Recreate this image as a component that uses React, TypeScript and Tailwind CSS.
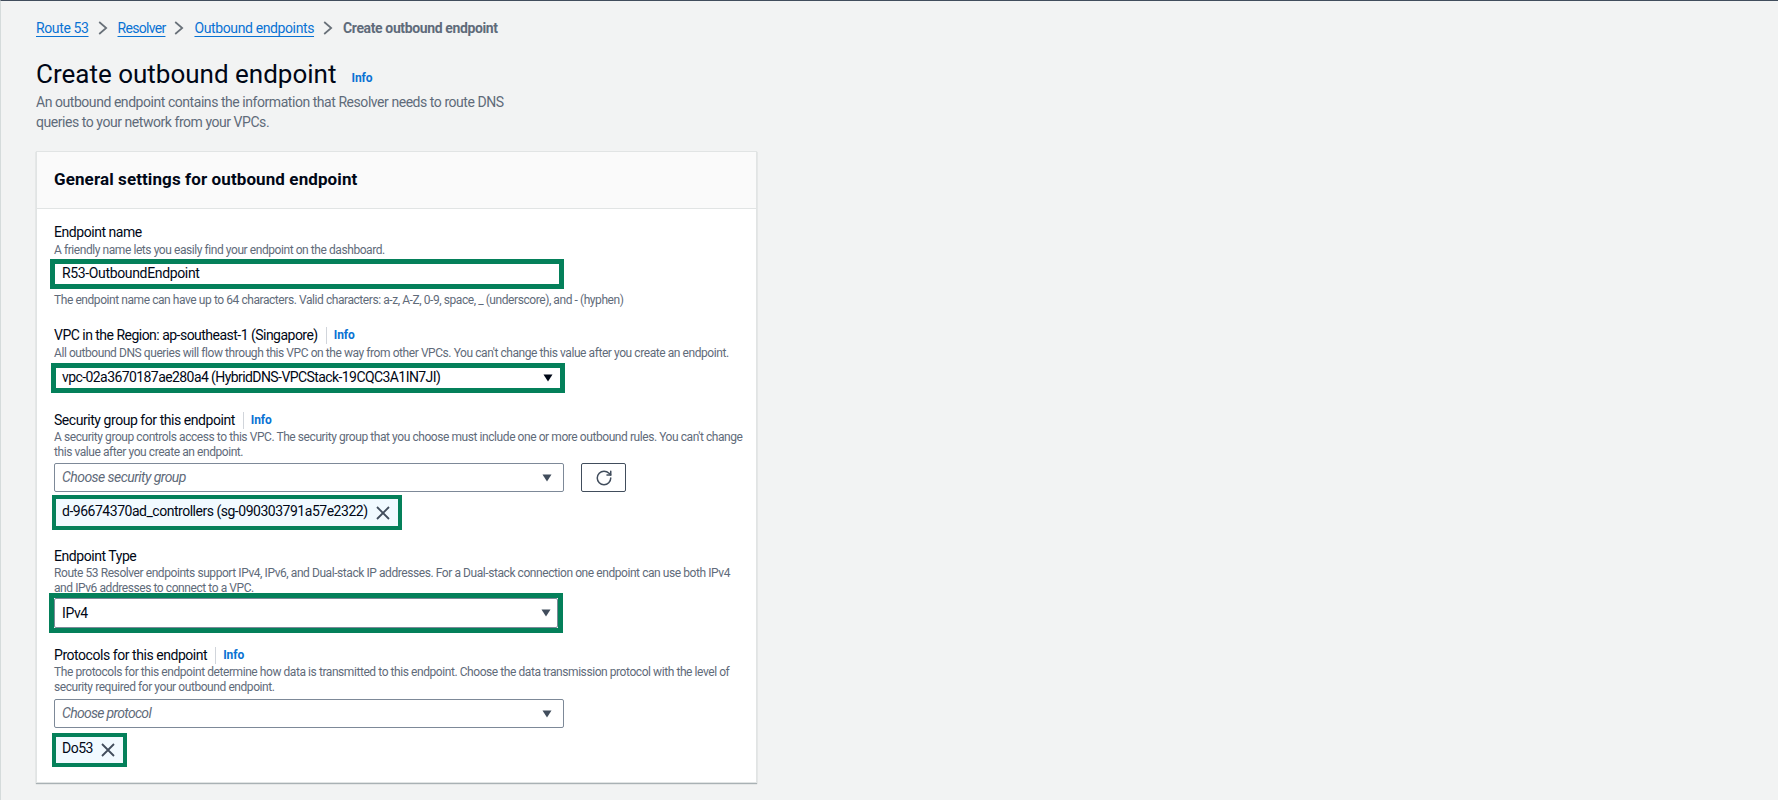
import { RotateCw } from "lucide-react";

function Crumb({ text, tight }: { text: string; tight?: boolean }) {
  return <a className={`text-[#0972d3] underline underline-offset-[3px] ${tight ? "tracking-[-0.7px]" : ""}`}>{text}</a>;
}

function CrumbArrow() {
  return (
    <svg width="10" height="14" viewBox="0 0 10 14" className="ml-[9px] mr-[10px] text-[#687078]">
      <path d="M1.2 1l7 6-7 6" fill="none" stroke="currentColor" strokeWidth="1.7" />
    </svg>
  );
}

function Label({ text, info, tight }: { text: string; info?: boolean; tight?: boolean }) {
  return (
    <div className={`flex items-center h-[18px] text-[14px] leading-[18px] text-[#000716] ${tight ? "tracking-[-0.52px]" : "tracking-[-0.45px]"}`}>
      <span>{text}</span>
      {info && (
        <span className="flex items-center ml-2 pl-[7px] border-l border-[#d1d5db] h-[17px]">
          <span className="font-bold text-[#0972d3] text-[12px] leading-4 tracking-[-0.1px]">Info</span>
        </span>
      )}
    </div>
  );
}

function Desc({ children, single }: { children: React.ReactNode; single?: boolean }) {
  return (
    <p className={`text-[12px] leading-[15px] text-[#5f6b7a] tracking-[-0.43px] w-[690px] ${single ? "pt-[2px] -mb-px" : "pt-px"}`}>
      {children}
    </p>
  );
}

function Caret({ dark }: { dark?: boolean }) {
  return (
    <svg width="10" height="8" viewBox="0 0 10 8" className={dark ? "text-[#000716]" : "text-[#414d5c]"}>
      <path d="M0.5 0.5h9L5 7.5z" fill="currentColor" />
    </svg>
  );
}

function Select({ value, textClass, pad }: { value: string; textClass: string; pad: string }) {
  return (
    <div className={`flex items-center justify-between w-full h-full pl-[7px] bg-white border border-[#7d8998] rounded-[2px] ${pad}`}>
      <span className={`text-[14px] ${textClass}`}>{value}</span>
      <Caret />
    </div>
  );
}

function Token({ text, h }: { text: string; h: string }) {
  return (
    <div className={`inline-flex items-center border-[4px] border-[#04805a] bg-[#f1faff] pl-[6px] pr-[8px] ${h}`}>
      <span className="text-[14px] tracking-[-0.48px] text-[#000716] -mt-[3px]">{text}</span>
      <svg width="14" height="14" viewBox="0 0 14 14" className="ml-[8px] text-[#414d5c]">
        <path d="M1 1l12 12M13 1L1 13" fill="none" stroke="currentColor" strokeWidth="1.8" />
      </svg>
    </div>
  );
}

export default function App() {
  return (
    <div className="[font-family:Roboto,'Liberation_Sans',sans-serif] w-[1778px] h-[800px] overflow-hidden bg-[#f2f3f3] border-t border-l border-t-[#414d5c] border-l-[#d5dbdb] pl-[35px]">
      <nav className="flex items-center h-[18px] mt-[18px] text-[14px] tracking-[-0.38px]">
        <Crumb text="Route 53" />
        <CrumbArrow />
        <Crumb text="Resolver" tight />
        <CrumbArrow />
        <Crumb text="Outbound endpoints" />
        <CrumbArrow />
        <span className="font-bold text-[#5f6b7a]">Create outbound endpoint</span>
      </nav>

      <div className="flex items-start mt-[18px] h-[36px]">
        <h1 className="pt-px text-[26px] leading-[36px] text-[#000716]">Create outbound endpoint</h1>
        <span className="ml-[15px] mt-[15px] font-bold text-[#0972d3] text-[12px] leading-4 tracking-[-0.1px]">Info</span>
      </div>
      <p className="mt-px text-[14px] leading-[20px] text-[#5f6b7a] tracking-[-0.45px]">
        An outbound endpoint contains the information that Resolver needs to route DNS
        <br />
        queries to your network from your VPCs.
      </p>

      <section className="mt-[19px] w-[721px] bg-white border border-[#e1e4e4] shadow-[0_1px_1px_rgba(0,28,36,0.3)]">
        <header className="h-[57px] bg-[#fafafa] border-b border-[#e1e4e4] flex items-center px-[17px]">
          <h2 className="text-[17px] font-bold text-[#000716] tracking-[0.1px]">General settings for outbound endpoint</h2>
        </header>
        <div className="pl-[17px] pr-[18px] pt-[14px] pb-[15px]">
          <Label text="Endpoint name" />
          <Desc single>A friendly name lets you easily find your endpoint on the dashboard.</Desc>
          <div className="-ml-[4px] mt-[2px] w-[514px] h-[30px] border-[5px] border-[#04805a] bg-white flex items-center pl-[7px]">
            <span className="text-[14px] tracking-[-0.35px] text-[#000716] -mt-[2px]">R53-OutboundEndpoint</span>
          </div>
          <div className="mt-[2px]">
            <Desc single>The endpoint name can have up to 64 characters. Valid characters: a-z, A-Z, 0-9, space, _ (underscore), and - (hyphen)</Desc>
          </div>

          <div className="mt-[19px]"><Label text="VPC in the Region: ap-southeast-1 (Singapore)" info tight /></div>
          <Desc single>All outbound DNS queries will flow through this VPC on the way from other VPCs. You can't change this value after you create an endpoint.</Desc>
          <div className="-ml-[3px] mt-[3px] w-[514px] h-[30px] border-[5px] border-[#04805a] bg-white flex items-center justify-between pl-[6px] pr-[7px]">
            <span className="text-[14px] tracking-[-0.58px] text-[#000716] -mt-[2px]">vpc-02a3670187ae280a4 (HybridDNS-VPCStack-19CQC3A1IN7JI)</span>
            <Caret dark />
          </div>

          <div className="mt-[18px]"><Label text="Security group for this endpoint" info /></div>
          <Desc>
            A security group controls access to this VPC. The security group that you choose must include one or more outbound rules. You can't change this value after you create an endpoint.
          </Desc>
          <div className="flex items-center gap-[17px] mt-[3px]">
            <div className="w-[510px] h-[29px]">
              <Select value="Choose security group" textClass="italic text-[#5f6b7a] tracking-[-0.55px] -mt-px" pad="pr-[11px]" />
            </div>
            <button className="w-[45px] h-[29px] border border-[#414d5c] rounded-[2px] flex items-center justify-center">
              <RotateCw size={18} strokeWidth={2} className="text-[#414d5c]" />
            </button>
          </div>
          <div className="-ml-[2px] mt-[3px] flex">
            <Token text="d-96674370ad_controllers (sg-090303791a57e2322)" h="h-[35px]" />
          </div>

          <div className="mt-[17px]"><Label text="Endpoint Type" /></div>
          <Desc>
            Route 53 Resolver endpoints support IPv4, IPv6, and Dual-stack IP addresses. For a Dual-stack connection one endpoint can use both IPv4 and IPv6 addresses to connect to a VPC.
          </Desc>
          <div className="-ml-[5px] -mt-[3px] relative w-[514px] h-[40px] border-[5px] border-[#04805a]">
            <Select value="IPv4" textClass="text-[#000716] tracking-[-0.4px]" pad="pr-[6px]" />
          </div>

          <div className="mt-[13px]"><Label text="Protocols for this endpoint" info /></div>
          <Desc>
            The protocols for this endpoint determine how data is transmitted to this endpoint. Choose the data transmission protocol with the level of security required for your outbound endpoint.
          </Desc>
          <div className="mt-[4px] w-[510px] h-[29px]">
            <Select value="Choose protocol" textClass="italic text-[#5f6b7a] tracking-[-0.7px] -mt-px" pad="pr-[11px]" />
          </div>
          <div className="-ml-[2px] mt-[5px] flex">
            <Token text="Do53" h="h-[34px]" />
          </div>
        </div>
      </section>
    </div>
  );
}
